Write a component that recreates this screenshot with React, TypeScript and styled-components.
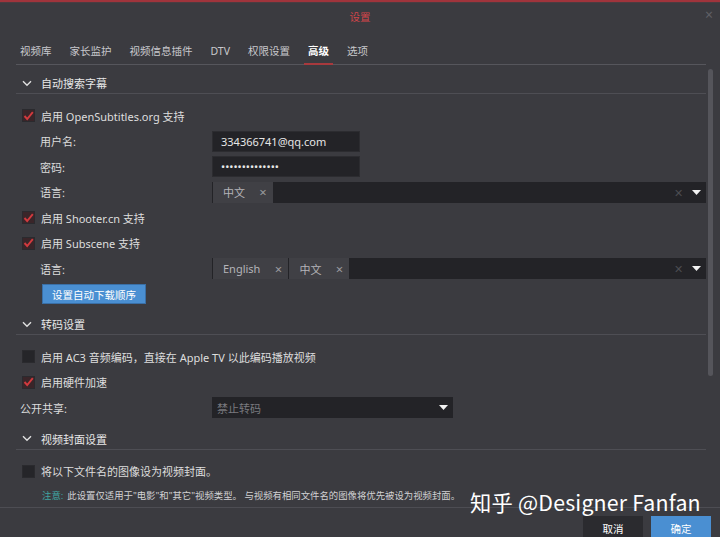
import { FunctionComponent } from "react";
import styled, { createGlobalStyle } from "styled-components";

const GlobalStyle = createGlobalStyle`
  html, body {
    margin: 0;
    padding: 0;
    background: #3b3b40;
  }
  body {
    font-family: "Noto Sans", "Noto Sans CJK SC", sans-serif;
    font-size: 11px;
    color: #dadada;
  }
`;

const Dialog = styled.div`
  position: relative;
  width: 720px;
  height: 537px;
  display: flex;
  flex-direction: column;
  background: #3b3b40;
  overflow: hidden;
  border-top: 2px solid #a0343c;
  box-sizing: border-box;
`;

const TitleBar = styled.div`
  height: 26px;
  display: flex;
  align-items: center;
  justify-content: center;
  position: relative;
  color: #d2454a;
  font-size: 10.5px;
  border-top: 1px solid #4b3c41;
`;

const CloseBtn = styled.span`
  position: absolute;
  right: 7px;
  top: 5px;
  color: #606066;
  font-size: 14px;
  line-height: 14px;
`;

const Tabs = styled.div`
  margin: 9px 14px 0 16px;
  height: 26px;
  display: flex;
  align-items: stretch;
  border-bottom: 1px solid #56565c;
`;

const Tab = styled.div<{ $active?: boolean }>`
  padding: 0 4px;
  margin-right: 10px;
  display: flex;
  align-items: center;
  font-size: 10.5px;
  color: ${(p) => (p.$active ? "#ffffff" : "#c8c8cc")};
  font-weight: ${(p) => (p.$active ? 700 : 400)};
  border-bottom: 2px solid ${(p) => (p.$active ? "#a8393d" : "transparent")};
  margin-bottom: -1px;
`;

const Body = styled.div`
  flex: 1;
  display: flex;
  min-height: 0;
`;

const Content = styled.div`
  flex: 1;
  padding: 8px 0 0 16px;
  overflow: hidden;
`;

const ScrollTrack = styled.div`
  width: 8px;
  margin: 2px 6px 0 0;
  display: flex;
  justify-content: center;
`;

const ScrollThumb = styled.div`
  width: 5px;
  height: 307px;
  margin-top: 2px;
  border-radius: 3px;
  background: #55555b;
`;

const Section = styled.section<{ $gap?: number }>`
  margin-top: ${(p) => p.$gap || 0}px;
`;

const SectionHeader = styled.div`
  height: 20px;
  display: flex;
  align-items: center;
  gap: 9px;
  padding-left: 6px;
  border-bottom: 1px solid #4e4e54;
  color: #e8e8e8;
  font-size: 11px;
`;

const SectionBody = styled.div`
  padding-top: 9px;
`;

const Row = styled.div<{ $indent?: number }>`
  height: 25.5px;
  display: flex;
  align-items: center;
  padding-left: ${(p) => p.$indent ?? 24}px;
`;

const Label = styled.div<{ $width: number }>`
  width: ${(p) => p.$width}px;
  flex-shrink: 0;
  color: #dcdcdc;
`;

const CheckRow = styled.label`
  height: 25.5px;
  display: flex;
  align-items: center;
  gap: 6px;
  padding-left: 6px;
  color: #dedede;
`;

const Box = styled.span<{ $checked?: boolean }>`
  width: 13px;
  height: 13px;
  box-sizing: border-box;
  border: 1px solid #2a2a2e;
  background: ${(p) => (p.$checked ? "#3a2529" : "#252529")};
  display: flex;
  align-items: center;
  justify-content: center;
`;

const TextInput = styled.div`
  width: 148px;
  height: 21px;
  box-sizing: border-box;
  background: #232327;
  border: 1px solid #2c2c30;
  padding: 0 8px;
  display: flex;
  align-items: center;
  color: #e6e6e6;
  font-size: 11px;
`;

const TagSelect = styled.div`
  flex: 1;
  height: 21px;
  background: #232327;
  display: flex;
  align-items: stretch;
  padding-left: 1px;
`;

const Tag = styled.div`
  display: flex;
  align-items: center;
  padding: 0 0 0 10px;
  margin-right: 1px;
  background: #404045;
  color: #b4b4b8;
  font-size: 11px;
`;

const TagX = styled.span`
  width: 20px;
  margin-left: 8px;
  text-align: center;
  color: #9a9a9e;
  font-size: 13px;
`;

const Spacer = styled.div`
  flex: 1;
`;

const ClearX = styled.span`
  width: 16px;
  align-self: center;
  text-align: center;
  color: #4c4c51;
  font-size: 11px;
`;

const Caret = styled.span`
  width: 20px;
  display: flex;
  align-items: center;
  justify-content: center;
`;

const SelectBox = styled.div`
  width: 241px;
  height: 21px;
  box-sizing: border-box;
  background: #232327;
  display: flex;
  align-items: center;
  padding-left: 5px;
  color: #7a7a7f;
`;

const BlueButton = styled.button`
  height: 20px;
  padding: 0 9px;
  border: 1px solid #3a6fa6;
  background: #4a8fd2;
  color: #ffffff;
  font-family: inherit;
  font-size: 10.5px;
  cursor: pointer;
`;

const Note = styled.div`
  height: 22px;
  display: flex;
  align-items: center;
  padding-left: 26px;
  font-size: 9.4px;
  color: #d2d2d4;
  white-space: nowrap;
`;

const NoteKey = styled.span`
  color: #3fa3a0;
  margin-right: 4px;
`;

const Footer = styled.div`
  height: 30px;
  box-sizing: border-box;
  border-top: 1px solid #4d4d53;
  display: flex;
  justify-content: flex-end;
  align-items: flex-start;
  padding: 8px 9px 0 0;
  gap: 8px;
  overflow: hidden;
`;

const FooterButton = styled.button<{ $primary?: boolean }>`
  width: 60px;
  height: 24px;
  flex-shrink: 0;
  border: none;
  background: ${(p) => (p.$primary ? "#4a8fd2" : "#2b2b2f")};
  color: #ffffff;
  font-family: inherit;
  font-size: 10.5px;
`;

const Watermark = styled.div`
  position: absolute;
  left: 470px;
  top: 484px;
  font-family: "Noto Sans CJK SC", "Noto Sans", sans-serif;
  font-size: 21.3px;
  color: #ffffff;
  white-space: nowrap;
  letter-spacing: 0.2px;
`;

const Chevron = () => (
  <svg width="10" height="7" viewBox="0 0 10 7">
    <path d="M1 1.2 L5 5.2 L9 1.2" fill="none" stroke="#e0e0e0" strokeWidth="1.4" />
  </svg>
);

const Check: FunctionComponent<{ checked?: boolean }> = ({ checked }) => (
  <Box $checked={checked}>
    {checked && (
      <svg width="11" height="10" viewBox="0 0 11 10">
        <path d="M1.5 5 L4.2 8 L9.8 1.2" fill="none" stroke="#d23a3e" strokeWidth="1.9" />
      </svg>
    )}
  </Box>
);

const Triangle = () => (
  <svg width="9" height="5" viewBox="0 0 9 5">
    <path d="M0 0 H9 L4.5 5 Z" fill="#f2f2f2" />
  </svg>
);

const LangSelect: FunctionComponent<{ tags: string[] }> = ({ tags }) => (
  <TagSelect>
    {tags.map((t) => (
      <Tag key={t}>
        {t}
        <TagX>×</TagX>
      </Tag>
    ))}
    <Spacer />
    <ClearX>✕</ClearX>
    <Caret>
      <Triangle />
    </Caret>
  </TagSelect>
);

const tabs = ["视频库", "家长监护", "视频信息插件", "DTV", "权限设置", "高级", "选项"];

const App = () => {
  return (
    <>
      <GlobalStyle />
      <Dialog>
        <TitleBar>
          设置
          <CloseBtn>×</CloseBtn>
        </TitleBar>
        <Tabs>
          {tabs.map((t) => (
            <Tab key={t} $active={t === "高级"}>
              {t}
            </Tab>
          ))}
        </Tabs>
        <Body>
          <Content>
            <Section>
              <SectionHeader>
                <Chevron />
                自动搜索字幕
              </SectionHeader>
              <SectionBody>
                <CheckRow>
                  <Check checked />
                  启用 OpenSubtitles.org 支持
                </CheckRow>
                <Row>
                  <Label $width={172}>用户名:</Label>
                  <TextInput>334366741@qq.com</TextInput>
                </Row>
                <Row>
                  <Label $width={172}>密码:</Label>
                  <TextInput>••••••••••••••</TextInput>
                </Row>
                <Row>
                  <Label $width={172}>语言:</Label>
                  <LangSelect tags={["中文"]} />
                </Row>
                <CheckRow>
                  <Check checked />
                  启用 Shooter.cn 支持
                </CheckRow>
                <CheckRow>
                  <Check checked />
                  启用 Subscene 支持
                </CheckRow>
                <Row>
                  <Label $width={172}>语言:</Label>
                  <LangSelect tags={["English", "中文"]} />
                </Row>
                <Row $indent={26}>
                  <BlueButton>设置自动下载顺序</BlueButton>
                </Row>
              </SectionBody>
            </Section>

            <Section $gap={7}>
              <SectionHeader>
                <Chevron />
                转码设置
              </SectionHeader>
              <SectionBody>
                <CheckRow>
                  <Check />
                  启用 AC3 音频编码，直接在 Apple TV 以此编码播放视频
                </CheckRow>
                <CheckRow>
                  <Check checked />
                  启用硬件加速
                </CheckRow>
                <Row $indent={4}>
                  <Label $width={192}>公开共享:</Label>
                  <SelectBox>
                    禁止转码
                    <Spacer />
                    <Caret>
                      <Triangle />
                    </Caret>
                  </SelectBox>
                </Row>
              </SectionBody>
            </Section>

            <Section $gap={8}>
              <SectionHeader>
                <Chevron />
                视频封面设置
              </SectionHeader>
              <SectionBody>
                <CheckRow>
                  <Check />
                  将以下文件名的图像设为视频封面。
                </CheckRow>
                <Note>
                  <NoteKey>注意:</NoteKey>
                  此设置仅适用于"电影"和"其它"视频类型。 与视频有相同文件名的图像将优先被设为视频封面。
                </Note>
              </SectionBody>
            </Section>
          </Content>
          <ScrollTrack>
            <ScrollThumb />
          </ScrollTrack>
        </Body>
        <Footer>
          <FooterButton>取消</FooterButton>
          <FooterButton $primary>确定</FooterButton>
        </Footer>
        <Watermark>知乎 @Designer Fanfan</Watermark>
      </Dialog>
    </>
  );
};

export default App;
